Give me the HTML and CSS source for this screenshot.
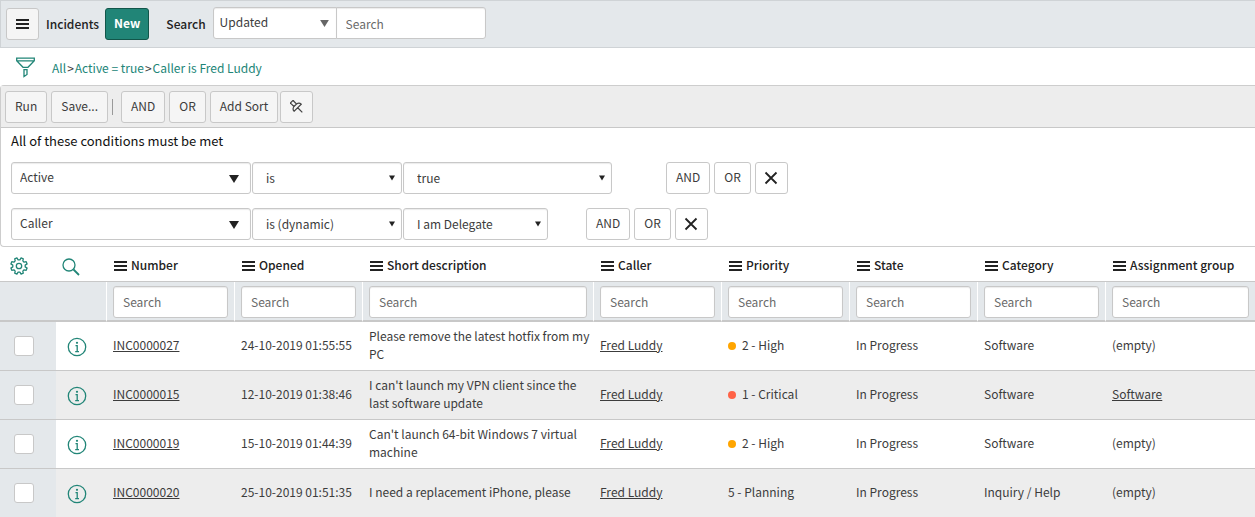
FILE: index.html
```html
<!DOCTYPE html>
<html lang="en">
<head>
  <meta charset="UTF-8">
  <meta name="viewport" content="width=device-width, initial-scale=1.0">
  <title>Incidents</title>
  <link rel="stylesheet" href="styles.css">
</head>
<body>

<!-- icons used more than once -->
<svg class="sprite" aria-hidden="true">
  <symbol id="menu" viewBox="0 0 13 10">
    <path d="M0 1h13M0 5h13M0 9h13" stroke="currentColor" stroke-width="2"/>
  </symbol>
  <symbol id="arrow" viewBox="0 0 10 8">
    <path d="M0 0h10L5 8z" fill="currentColor"/>
  </symbol>
  <symbol id="cross" viewBox="0 0 14 14">
    <path d="M1.500 1.500l11 11M12.500 1.500l-11 11" stroke="currentColor" stroke-width="1.800" fill="none"/>
  </symbol>
  <symbol id="info" viewBox="0 0 20 20">
    <circle cx="10" cy="10" r="8.700" fill="none" stroke="currentColor" stroke-width="1.300"/>
    <circle cx="10" cy="5.800" r="1.100" fill="currentColor"/>
    <path d="M8.500 8.700h1.700v6M8.200 14.700h3.800" fill="none" stroke="currentColor" stroke-width="1.300"/>
  </symbol>
</svg>

<header class="navbar">
  <button class="btn btn-icon" aria-label="Menu"><svg width="13" height="10"><use href="#menu"/></svg></button>
  <h1>Incidents</h1>
  <button class="btn btn-primary">New</button>
  <label for="searchField">Search</label>
  <div class="search-group">
    <div class="select search-select">
      <select id="searchField"><option>Updated</option></select>
      <svg class="arrow"><use href="#arrow"/></svg>
    </div>
    <input type="text" class="search-text" placeholder="Search" aria-label="Search text">
  </div>
</header>

<nav class="breadcrumb">
  <button class="icon-btn" aria-label="Show / hide filter">
    <svg width="19" height="21" viewBox="0 0 19 21" fill="none" stroke="currentColor" stroke-width="1.300">
      <path d="M.7 1.200h17.600v2.600L12 10.300H7L.7 3.800zM.7 3.800h17.600M8 12.700h3v4.800l-3 2z"/>
    </svg>
  </button>
  <div class="crumbs"><a href="#">All</a><span>&gt;</span><a href="#">Active = true</a><span>&gt;</span><a href="#">Caller is Fred Luddy</a></div>
</nav>

<section class="filter">
  <div class="toolbar">
    <button class="btn">Run</button>
    <button class="btn">Save...</button>
    <span class="divider"></span>
    <button class="btn">AND</button>
    <button class="btn">OR</button>
    <button class="btn">Add Sort</button>
    <button class="btn btn-icon btn-pin" aria-label="Pin filter">
      <svg width="14" height="14" viewBox="0 0 14 14" fill="none" stroke="currentColor" stroke-width="1.200">
        <path transform="rotate(-45 7 7)" d="M4 -.5h6M5.200 0v4.500M8.800 0v4.500M2 8c0-2 1.500-3.200 3.200-3.500h3.600C10.500 4.800 12 6 12 8zM7 8v6.500"/>
      </svg>
    </button>
  </div>
  <div class="conditions">
    <p>All of these conditions must be met</p>
    <div class="condition">
      <div class="select field">
        <select aria-label="Field"><option>Active</option></select>
        <svg class="arrow"><use href="#arrow"/></svg>
      </div>
      <div class="select operator">
        <select aria-label="Operator"><option>is</option></select>
        <svg class="arrow"><use href="#arrow"/></svg>
      </div>
      <div class="select value">
        <select aria-label="Value"><option>true</option></select>
        <svg class="arrow"><use href="#arrow"/></svg>
      </div>
      <div class="actions">
        <button class="btn">AND</button>
        <button class="btn">OR</button>
        <button class="btn btn-icon" aria-label="Remove condition"><svg width="14" height="14"><use href="#cross"/></svg></button>
      </div>
    </div>
    <div class="condition">
      <div class="select field">
        <select aria-label="Field"><option>Caller</option></select>
        <svg class="arrow"><use href="#arrow"/></svg>
      </div>
      <div class="select operator">
        <select aria-label="Operator"><option>is (dynamic)</option></select>
        <svg class="arrow"><use href="#arrow"/></svg>
      </div>
      <div class="select value value-dynamic">
        <select aria-label="Value"><option>I am Delegate</option></select>
        <svg class="arrow"><use href="#arrow"/></svg>
      </div>
      <div class="actions">
        <button class="btn">AND</button>
        <button class="btn">OR</button>
        <button class="btn btn-icon" aria-label="Remove condition"><svg width="14" height="14"><use href="#cross"/></svg></button>
      </div>
    </div>
  </div>
</section>

<table class="list">
  <colgroup>
    <col class="col-check"><col class="col-info"><col class="col"><col class="col"><col>
    <col class="col"><col class="col"><col class="col"><col class="col"><col class="col-group">
  </colgroup>
  <thead>
    <tr class="titles">
      <th>
        <button class="icon-btn" aria-label="Personalize list">
          <svg width="18" height="18" viewBox="0 0 18 18" fill="none" stroke="currentColor" stroke-width="1.300" stroke-linejoin="round">
            <path d="M15.200 9.900L17.100 11.100 16.200 13.300 14.100 12.800 12.800 14.100 13.300 16.200 11.100 17.100 9.900 15.200H8.100L6.900 17.100 4.700 16.200 5.200 14.100 3.900 12.800 1.800 13.300.9 11.100 2.800 9.900V8.100L.9 6.900 1.800 4.700 3.900 5.200 5.200 3.900 4.700 1.800 6.900.9 8.100 2.800H9.900L11.100.9 13.300 1.800 12.800 3.900 14.100 5.200 16.200 4.700 17.100 6.900 15.200 8.100z"/>
            <circle cx="9" cy="9" r="2.700"/>
          </svg>
        </button>
      </th>
      <th>
        <button class="icon-btn" aria-label="Search list">
          <svg width="18" height="18" viewBox="0 0 18 18" fill="none" stroke="currentColor">
            <circle cx="7" cy="7" r="6" stroke-width="1.300"/>
            <path d="M11.500 11.500l5.500 5.500" stroke-width="1.800"/>
          </svg>
        </button>
      </th>
      <th><svg width="13" height="10"><use href="#menu"/></svg>Number</th>
      <th><svg width="13" height="10"><use href="#menu"/></svg>Opened</th>
      <th><svg width="13" height="10"><use href="#menu"/></svg>Short description</th>
      <th><svg width="13" height="10"><use href="#menu"/></svg>Caller</th>
      <th><svg width="13" height="10"><use href="#menu"/></svg>Priority</th>
      <th><svg width="13" height="10"><use href="#menu"/></svg>State</th>
      <th><svg width="13" height="10"><use href="#menu"/></svg>Category</th>
      <th><svg width="13" height="10"><use href="#menu"/></svg>Assignment group</th>
    </tr>
    <tr class="searches">
      <td></td>
      <td></td>
      <td><input type="text" placeholder="Search" aria-label="Search number"></td>
      <td><input type="text" placeholder="Search" aria-label="Search opened"></td>
      <td><input type="text" placeholder="Search" aria-label="Search short description"></td>
      <td><input type="text" placeholder="Search" aria-label="Search caller"></td>
      <td><input type="text" placeholder="Search" aria-label="Search priority"></td>
      <td><input type="text" placeholder="Search" aria-label="Search state"></td>
      <td><input type="text" placeholder="Search" aria-label="Search category"></td>
      <td><input type="text" placeholder="Search" aria-label="Search assignment group"></td>
    </tr>
  </thead>
  <tbody>
    <tr>
      <td><input type="checkbox" aria-label="Select INC0000027"></td>
      <td><button class="icon-btn" aria-label="Preview"><svg width="20" height="20"><use href="#info"/></svg></button></td>
      <td><a href="#">INC0000027</a></td>
      <td>24-10-2019 01:55:55</td>
      <td>Please remove the latest hotfix from my PC</td>
      <td><a href="#">Fred Luddy</a></td>
      <td><span class="dot high"></span>2 - High</td>
      <td>In Progress</td>
      <td>Software</td>
      <td>(empty)</td>
    </tr>
    <tr>
      <td><input type="checkbox" aria-label="Select INC0000015"></td>
      <td><button class="icon-btn" aria-label="Preview"><svg width="20" height="20"><use href="#info"/></svg></button></td>
      <td><a href="#">INC0000015</a></td>
      <td>12-10-2019 01:38:46</td>
      <td>I can't launch my VPN client since the last software update</td>
      <td><a href="#">Fred Luddy</a></td>
      <td><span class="dot critical"></span>1 - Critical</td>
      <td>In Progress</td>
      <td>Software</td>
      <td><a href="#">Software</a></td>
    </tr>
    <tr>
      <td><input type="checkbox" aria-label="Select INC0000019"></td>
      <td><button class="icon-btn" aria-label="Preview"><svg width="20" height="20"><use href="#info"/></svg></button></td>
      <td><a href="#">INC0000019</a></td>
      <td>15-10-2019 01:44:39</td>
      <td>Can't launch 64-bit Windows 7 virtual machine</td>
      <td><a href="#">Fred Luddy</a></td>
      <td><span class="dot high"></span>2 - High</td>
      <td>In Progress</td>
      <td>Software</td>
      <td>(empty)</td>
    </tr>
    <tr>
      <td><input type="checkbox" aria-label="Select INC0000020"></td>
      <td><button class="icon-btn" aria-label="Preview"><svg width="20" height="20"><use href="#info"/></svg></button></td>
      <td><a href="#">INC0000020</a></td>
      <td>25-10-2019 01:51:35</td>
      <td>I need a replacement iPhone, please</td>
      <td><a href="#">Fred Luddy</a></td>
      <td>5 - Planning</td>
      <td>In Progress</td>
      <td>Inquiry / Help</td>
      <td>(empty)</td>
    </tr>
  </tbody>
</table>

</body>
</html>
```
FILE: styles.css
```css
* {
  box-sizing: border-box;
}
body {
  margin: 0;
  background-color: #fff;
  color: #3c3c3c;
  font-family: "Noto Sans CJK SC", sans-serif;
  font-size: 12px;
  line-height: 18px;
}
button, input, select {
  margin: 0;
  font: inherit;
  color: inherit;
}
.sprite {
  display: none;
}
svg {
  display: block;
  flex: none;
}

/* buttons and fields */
.btn {
  height: 32px;
  padding: 0 9px 2px;
  border: 1px solid #c8c8c8;
  border-radius: 3px;
  background-color: #f5f5f5;
  cursor: pointer;
}
.btn-icon {
  display: flex;
  align-items: center;
  justify-content: center;
  width: 33px;
  padding: 0;
  color: #222;
}
.btn-primary {
  padding: 0 8px 2px;
  border-color: #12564a;
  background-color: #218577;
  color: #fff;
  font-weight: bold;
}
.icon-btn {
  padding: 0;
  border: 0;
  background: none;
  color: #218577;
  cursor: pointer;
}
input[type="text"], select {
  width: 100%;
  height: 32px;
  padding: 0 9px;
  border: 1px solid #c8c8c8;
  border-radius: 3px;
  background-color: #fff;
  box-shadow: inset 0 1px 1px rgba(0, 0, 0, 0.08);
}
input::placeholder {
  color: #6a6a6a;
  opacity: 1;
}
select {
  appearance: none;
}
.select {
  position: relative;
}
.arrow {
  position: absolute;
  top: 13px;
  right: 7px;
  width: 6px;
  height: 6px;
  color: #222;
  pointer-events: none;
}

/* top bar */
.navbar {
  display: flex;
  align-items: center;
  height: 48px;
  padding-left: 5px;
  border: 1px solid #cfd3d6;
  border-right: 0;
  background-color: #e4e8eb;
  color: #222;
}
.navbar h1 {
  margin: 0 6px 1px 7px;
  font-size: 12px;
  font-weight: 500;
}
.navbar label {
  margin: 0 7px 1px 17px;
  font-weight: 500;
}
.search-group {
  display: flex;
  margin-bottom: 2px;
  color: #3c3c3c;
}
.search-select {
  width: 124px;
}
.search-select select {
  padding: 0 6px 2px;
  border-radius: 3px 0 0 3px;
}
.search-select .arrow {
  right: 8px;
  width: 9px;
  height: 7px;
  color: #666;
}
.navbar .search-text {
  width: 150px;
  margin-left: -1px;
  border-radius: 0 3px 3px 0;
}

/* breadcrumb */
.breadcrumb {
  display: flex;
  align-items: center;
  gap: 17px;
  height: 37px;
  padding: 2px 16px 0;
}
.crumbs {
  display: flex;
  gap: 1px;
}
.crumbs a {
  color: #218577;
  text-decoration: none;
}

/* filter builder */
.filter {
  border: 1px solid #cdcdcd;
  border-right: 0;
  border-radius: 4px 0 0 4px;
}
.toolbar {
  display: flex;
  align-items: center;
  gap: 4px;
  padding: 5px 4px 4px;
  border-bottom: 1px solid #c8c8c8;
  background-color: #ededed;
}
.divider {
  width: 1px;
  height: 16px;
  margin-right: 4px;
  background-color: #999;
}
.btn-pin {
  margin-left: -2px;
  color: #444;
}
.conditions {
  padding: 4px 10px 6px;
}
.conditions p {
  margin: 0 0 12px;
  color: #111;
  font-size: 13px;
}
.condition {
  display: flex;
  gap: 1px;
}
.condition + .condition {
  margin-top: 14px;
}
.conditions .btn {
  background-color: #fff;
}
.field {
  width: 240px;
}
.field select {
  padding: 0 8px 2px;
}
.field .arrow {
  right: 12px;
  width: 10px;
  height: 8px;
}
.operator {
  width: 150px;
}
.value {
  width: 209px;
}
.value-dynamic {
  width: 145px;
}
.operator select, .value select {
  padding: 0 13px;
}
.actions {
  display: flex;
  gap: 4px;
  margin-left: 53px;
}
.value-dynamic + .actions {
  margin-left: 37px;
}

/* incident list */
.list {
  width: 100%;
  table-layout: fixed;
  border-collapse: separate;
  border-spacing: 0;
}
.col-check {
  width: 56px;
}
.col-info {
  width: 50px;
}
.col {
  width: 128px;
}
.col-group {
  width: 150px;
}
.list th, .list td {
  padding: 0 0 0 7px;
  border-bottom: 1px solid #c8c8c8;
  text-align: left;
}
.list th {
  height: 35px;
  padding-top: 1px;
  color: #222;
  font-weight: 500;
}
.list th > svg {
  display: inline-block;
  margin: 0 4px 0 1px;
  vertical-align: -1px;
}
.list .searches td {
  height: 40px;
  padding: 4px 6px 2px;
  border-bottom: 2px solid #c8c8c8;
  border-left: 1px solid #fff;
  background-color: #e4e8eb;
}
.list .searches td:nth-child(-n+2) {
  border-left: 0;
}
.list .searches input {
  padding-bottom: 2px;
}
.list tbody td {
  height: 49px;
  padding-top: 5px;
  padding-bottom: 7px;
}
.list tbody tr:nth-child(even) {
  background-color: #ededed;
}
.list tbody td:first-child {
  background-color: #e4e8eb;
}
.list .icon-btn {
  display: block;
  margin: 3px 0 0 3px;
}
.list th:nth-child(2) .icon-btn {
  margin: 4px 0 0 -1px;
}
.list tbody .icon-btn {
  margin: 4px 0 0 4px;
}
.list tbody a {
  color: inherit;
}
.list input[type="checkbox"] {
  appearance: none;
  display: block;
  width: 20px;
  height: 20px;
  margin: 2px 0 0 7px;
  border: 1px solid #c8c8c8;
  border-radius: 3px;
  background-color: #fff;
}
.dot {
  display: inline-block;
  width: 8px;
  height: 8px;
  margin-right: 6px;
  border-radius: 50%;
}
.high {
  background-color: #ffa500;
}
.critical {
  background-color: #ff6347;
}
```
